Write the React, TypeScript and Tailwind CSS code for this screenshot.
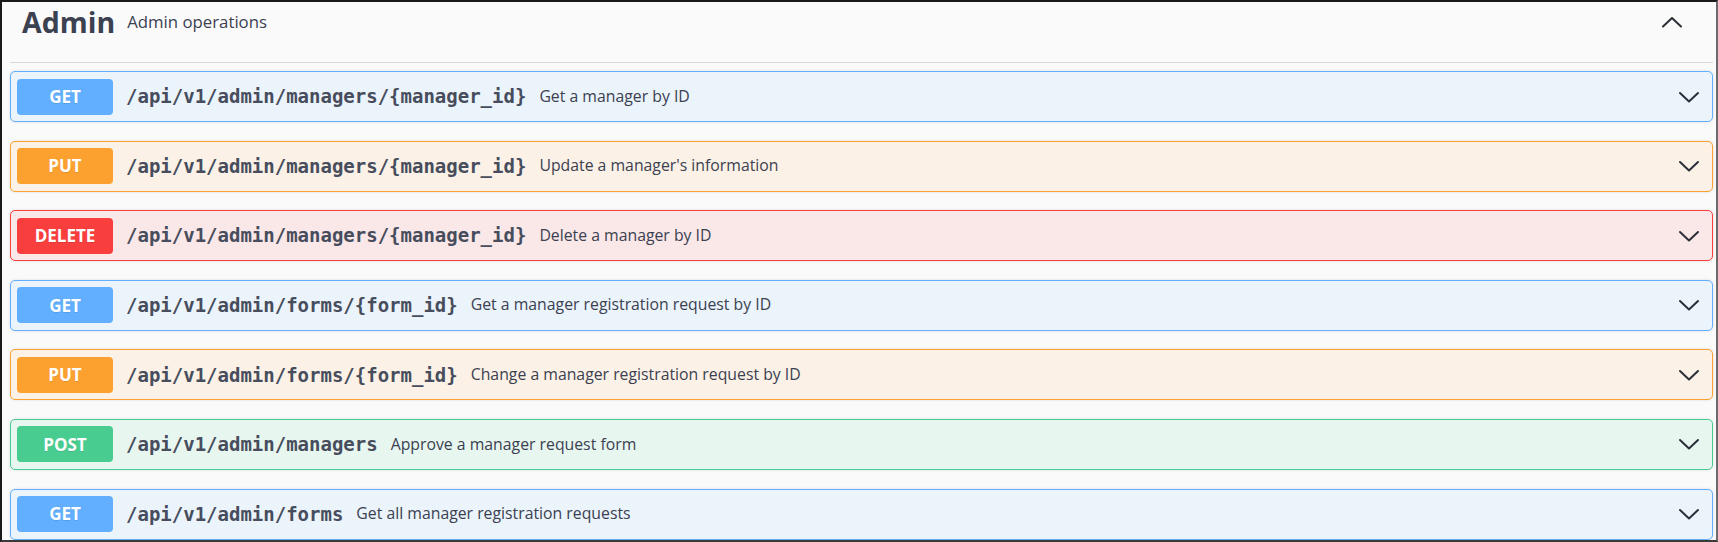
import React from "react";

type Op = { method: "GET" | "PUT" | "DELETE" | "POST"; path: string; desc: string };

const ops: Op[] = [
  { method: "GET", path: "/api/v1/admin/managers/{manager_id}", desc: "Get a manager by ID" },
  { method: "PUT", path: "/api/v1/admin/managers/{manager_id}", desc: "Update a manager's information" },
  { method: "DELETE", path: "/api/v1/admin/managers/{manager_id}", desc: "Delete a manager by ID" },
  { method: "GET", path: "/api/v1/admin/forms/{form_id}", desc: "Get a manager registration request by ID" },
  { method: "PUT", path: "/api/v1/admin/forms/{form_id}", desc: "Change a manager registration request by ID" },
  { method: "POST", path: "/api/v1/admin/managers", desc: "Approve a manager request form" },
  { method: "GET", path: "/api/v1/admin/forms", desc: "Get all manager registration requests" },
];

const styles: Record<Op["method"], { box: string; badge: string }> = {
  GET: { box: "bg-[#ebf3fb] border-[#61affe]", badge: "bg-[#61affe]" },
  PUT: { box: "bg-[#fbf1e6] border-[#fca130]", badge: "bg-[#fca130]" },
  DELETE: { box: "bg-[#fae7e7] border-[#f93e3e]", badge: "bg-[#f93e3e]" },
  POST: { box: "bg-[#e8f6f0] border-[#49cc90]", badge: "bg-[#49cc90]" },
};

function Chevron({ up = false }: { up?: boolean }) {
  return (
    <svg width="22" height="22" viewBox="0 0 22 22" fill="none">
      <path
        d={up ? "M2 15.5 L11 7 L20 15.5" : "M2 7 L11 15.5 L20 7"}
        stroke="#2b2f38"
        strokeWidth="2"
        strokeLinecap="round"
        strokeLinejoin="round"
      />
    </svg>
  );
}

export default function App() {
  return (
    <div
      className="w-[1718px] h-[542px] overflow-hidden bg-[#fafafa] border-l-2 border-t-2 border-r-2 border-b-2 border-l-[#1a1a1a] border-t-[#1a1a1a] border-r-[#6b6b6b] border-b-[#3a3a3a]"
      style={{ fontFamily: '"Open Sans", "Noto Sans", sans-serif' }}
    >
      <div className="pl-[8px] pr-[3px]">
        <div className="flex items-center h-[61px] pb-[21px] border-b border-[#d8d9dc]">
          <div className="flex items-center flex-1 pl-[12px]">
            <span className="text-[28.5px] leading-[38px] font-bold text-[#3b4151]">Admin</span>
            <span className="ml-[12px] text-[16.8px] text-[#3b4151]">Admin operations</span>
          </div>
          <div className="mr-[30px] mt-[1px]">
            <Chevron up />
          </div>
        </div>
        <div className="flex flex-col gap-[18.6px] pt-[8px]">
          {ops.map((op, i) => {
            const s = styles[op.method];
            return (
              <div
                key={i}
                className={`flex items-center h-[51px] border rounded-[5px] px-[6px] ${s.box}`}
                style={{ boxShadow: "0 0 3px rgba(0,0,0,0.12)" }}
              >
                <div
                  className={`w-[96px] h-[36px] rounded-[4px] flex items-center justify-center text-white font-bold text-[17px] ${s.badge}`}
                  style={{ textShadow: "0 1px 0 rgba(0,0,0,0.1)" }}
                >
                  {op.method}
                </div>
                <span
                  className="ml-[13px] text-[19px] font-semibold text-[#474d5c]"
                  style={{ fontFamily: '"DejaVu Sans Mono", monospace' }}
                >
                  {op.path}
                </span>
                <span className="ml-[13px] text-[15.8px] text-[#3b4151] flex-1">{op.desc}</span>
                <div className="mr-[6px]">
                  <Chevron />
                </div>
              </div>
            );
          })}
        </div>
      </div>
    </div>
  );
}
